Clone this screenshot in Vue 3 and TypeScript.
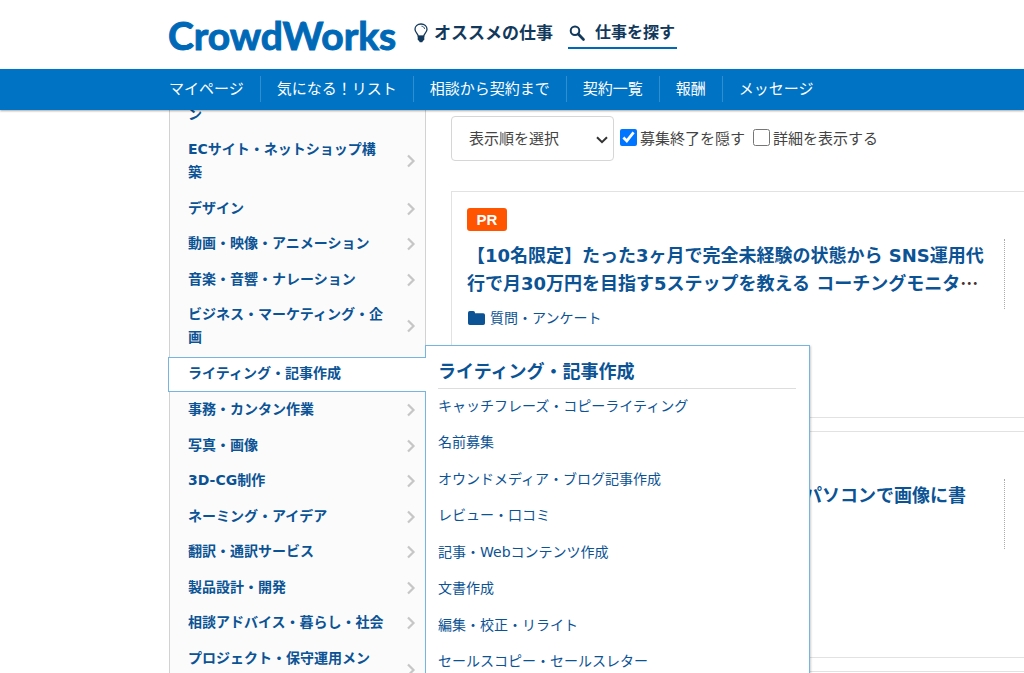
<script setup lang="ts">
import { ref } from 'vue'

interface Category {
  name: string
  active?: boolean
}

const navItems: string[] = ['マイページ', '気になる！リスト', '相談から契約まで', '契約一覧', '報酬', 'メッセージ']

const categories: Category[] = [
  { name: 'ン' },
  { name: 'ECサイト・ネットショップ構築' },
  { name: 'デザイン' },
  { name: '動画・映像・アニメーション' },
  { name: '音楽・音響・ナレーション' },
  { name: 'ビジネス・マーケティング・企画' },
  { name: 'ライティング・記事作成', active: true },
  { name: '事務・カンタン作業' },
  { name: '写真・画像' },
  { name: '3D-CG制作' },
  { name: 'ネーミング・アイデア' },
  { name: '翻訳・通訳サービス' },
  { name: '製品設計・開発' },
  { name: '相談アドバイス・暮らし・社会' },
  { name: 'プロジェクト・保守運用メンバー' },
]

const subCategories: string[] = [
  'キャッチフレーズ・コピーライティング',
  '名前募集',
  'オウンドメディア・ブログ記事作成',
  'レビュー・口コミ',
  '記事・Webコンテンツ作成',
  '文書作成',
  '編集・校正・リライト',
  'セールスコピー・セールスレター',
]

const hideClosed = ref(true)
const showDetail = ref(false)
</script>

<template>
  <div class="page" lang="ja">
    <header class="header">
      <div class="brand-row">
        <a href="#" class="logo">CrowdWorks</a>
        <a href="#" class="top-link">
          <svg class="bulb" width="14" height="20" viewBox="0 0 14 20" aria-hidden="true">
            <path d="M4.3 13.2C4.1 10.8 1 9.6 1 6.2C1 3 3.6 1 7 1s6 2 6 5.200c0 3.400-3.100 4.600-3.300 7z" fill="none" stroke="#12395b" stroke-width="1.3" />
            <path d="M7.500 3.200c1.700.1 2.900 1.100 3.100 2.700" fill="none" stroke="#12395b" stroke-width=".9" />
            <path d="M3.700 12.700h6.600v4.100l-1.400 1.200-.6 1.300H5.700l-.6-1.300-1.400-1.200z" fill="#12395b" />
          </svg>
          <span>オススメの仕事</span>
        </a>
        <a href="#" class="top-link current">
          <svg class="search" width="18" height="18" viewBox="0 0 18 18" aria-hidden="true">
            <circle cx="7" cy="6.800" r="4.300" fill="none" stroke="#12395b" stroke-width="2" />
            <path d="M10.200 10l5.300 5.500" stroke="#12395b" stroke-width="2.700" stroke-linecap="round" />
          </svg>
          <span>仕事を探す</span>
        </a>
      </div>
      <nav class="nav">
        <a v-for="item in navItems" :key="item" href="#">{{ item }}</a>
      </nav>
    </header>

    <main class="main">
      <aside class="sidebar">
        <ul class="categories">
          <li v-for="cat in categories" :key="cat.name" :class="{ active: cat.active }">
            <a href="#" class="category">
              <span>{{ cat.name }}</span>
              <svg v-if="!cat.active" width="10" height="14" viewBox="0 0 10 14" aria-hidden="true">
                <path d="M2 1.500L7.500 7L2 12.500" fill="none" stroke="#c6c6c6" stroke-width="2.200" />
              </svg>
            </a>
            <section v-if="cat.active" class="flyout">
              <h2>{{ cat.name }}</h2>
              <ul>
                <li v-for="sub in subCategories" :key="sub"><a href="#">{{ sub }}</a></li>
              </ul>
            </section>
          </li>
        </ul>
      </aside>

      <div class="content">
        <form class="filters">
          <div class="select-box">
            <select aria-label="表示順を選択">
              <option>表示順を選択</option>
            </select>
            <svg width="12" height="8" viewBox="0 0 12 8" aria-hidden="true">
              <path d="M1 1.200L6 6.200L11 1.200" fill="none" stroke="#333" stroke-width="2" />
            </svg>
          </div>
          <label><input v-model="hideClosed" type="checkbox" />募集終了を隠す</label>
          <label><input v-model="showDetail" type="checkbox" />詳細を表示する</label>
        </form>

        <article class="card">
          <div class="job">
            <span class="badge">PR</span>
            <h3><a href="#">【10名限定】たった3ヶ月で完全未経験の状態から SNS運用代行で月30万円を目指す5ステップを教える コーチングモニタ</a><span class="ellipsis">…</span></h3>
            <a href="#" class="job-category">
              <svg width="17" height="14" viewBox="0 0 17 14" aria-hidden="true">
                <path d="M0 1.800Q0 0 1.800 0H5.200Q7 0 7 1.800V2.200H15.200Q17 2.200 17 4V12.200Q17 14 15.200 14H1.800Q0 14 0 12.200z" fill="#0b5394" />
              </svg>
              <span>質問・アンケート</span>
            </a>
          </div>
          <div class="job-side"></div>
        </article>

        <article class="card">
          <div class="job tail">
            <h3><a href="#">パソコンで画像に書</a></h3>
          </div>
          <div class="job-side"></div>
        </article>

        <article class="card"></article>
      </div>
    </main>
  </div>
</template>

<style>
body {
  margin: 0;
  background: #fff;
}
</style>

<style scoped>
.page {
  height: 100vh;
  display: flex;
  flex-direction: column;
  overflow: hidden;
  font-family: "DejaVu Sans", "Noto Sans CJK JP", sans-serif;
  font-size: 15px;
  color: #444;
}

.page * {
  box-sizing: border-box;
}

a {
  color: #0b5394;
  text-decoration: none;
}

ul {
  list-style: none;
  margin: 0;
  padding: 0;
}

.header {
  flex: none;
  position: relative;
  z-index: 5;
}

.brand-row {
  height: 69px;
  padding-left: 168px;
  display: flex;
  align-items: center;
  background: #fff;
}

.logo {
  width: 246px;
  font: 700 39px/50px Lato, sans-serif;
  color: #0069b7;
  -webkit-text-stroke: 1px #0069b7;
}

.top-link {
  display: flex;
  align-items: center;
  gap: 6px;
  height: 30px;
  margin: 0 15px 2px 0;
  border-bottom: 2px solid transparent;
  font-size: 17px;
  line-height: 28px;
  font-weight: 700;
  color: #12395b;
}

.top-link.current {
  gap: 9px;
  padding-right: 2px;
  font-size: 16px;
  border-color: #0069b7;
}

.nav {
  height: 41px;
  padding: 0 0 2px 153px;
  display: flex;
  align-items: center;
  background: #0073c4;
  box-shadow: 0 1px 2px rgba(0, 0, 0, 0.35);
}

.nav a {
  padding: 0 16px;
  line-height: 26px;
  color: #fff;
}

.nav a + a {
  border-left: 1px solid #2e8ed2;
}

.main {
  flex: 1;
  min-height: 0;
  padding-left: 169px;
  display: flex;
  align-items: flex-start;
  gap: 25px;
}

.sidebar {
  flex: none;
  width: 257px;
  margin-top: -13px;
  position: relative;
  z-index: 2;
  background: #fbfbfb;
  border: 1px solid #d2d2d2;
  border-top: 0;
}

.categories > li {
  position: relative;
}

.categories > li:nth-child(even) {
  padding-bottom: 1px;
}

.categories > li:first-child svg {
  display: none;
}

.category {
  display: flex;
  align-items: center;
  justify-content: space-between;
  padding: 6px 9px 6px 18px;
  font-size: 14px;
  line-height: 23px;
  font-weight: 700;
  line-break: strict;
}

.category span {
  width: 200px;
}

.categories > .active {
  z-index: 1;
  margin: 0 -1px 0 -2px;
  padding-top: 1px;
}

.active .category {
  position: relative;
  z-index: 1;
  padding: 4px 10px 6px 19px;
  background: #fff;
  border: 1px solid #78b4e0;
  border-right: 0;
}

.flyout {
  position: absolute;
  top: -11px;
  left: calc(100% - 1px);
  width: 385px;
  padding: 13px 13px 20px 12px;
  background: #fff;
  border: 1px solid #78b4e0;
  box-shadow: 1px 1px 2px rgba(0, 0, 0, 0.2);
}

.flyout h2 {
  margin: 0;
  padding-bottom: 3px;
  border-bottom: 1px solid #ddd;
  font-size: 18px;
  line-height: 26px;
  color: #0b5394;
}

.flyout li {
  padding-bottom: 2px;
  font-size: 14px;
  line-height: 34px;
}

.flyout li:nth-child(even) {
  padding-bottom: 3px;
}

.content {
  flex: 1;
  min-width: 0;
  padding-top: 6px;
}

.filters {
  display: flex;
  align-items: center;
  margin-bottom: 30px;
}

.select-box {
  position: relative;
  width: 163px;
  height: 45px;
  margin-right: 6px;
}

.select-box select {
  appearance: none;
  width: 100%;
  height: 100%;
  padding: 0 17px;
  border: 1px solid #d6d6d6;
  border-radius: 4px;
  background: #fff;
  font: inherit;
  color: #444;
}

.select-box svg {
  position: absolute;
  right: 6px;
  top: 20px;
}

.filters label {
  display: flex;
  align-items: center;
  gap: 3px;
  margin-right: 8px;
  padding-bottom: 2px;
}

.filters input {
  width: 17px;
  height: 17px;
  margin: 0;
}

.card {
  display: flex;
  height: 227px;
  margin-bottom: 13px;
  padding: 16px 0 15px 15px;
  border: 1px solid #e2e2e2;
  border-right: 0;
}

.job {
  flex: 1;
  padding-right: 10px;
}

.badge {
  display: block;
  width: 40px;
  margin-bottom: 11px;
  border-radius: 3px;
  background: #ff5500;
  font: 700 15px/23px "Liberation Sans", sans-serif;
  color: #fff;
  text-align: center;
}

h3 {
  margin: 0;
  font-size: 18px;
  line-height: 27px;
}

.ellipsis {
  font-family: "Noto Sans CJK JP", sans-serif;
  color: #433;
}

.job-category {
  display: flex;
  align-items: center;
  gap: 5px;
  margin-top: 9px;
  padding-left: 1px;
  font-size: 14px;
  line-height: 24px;
}

.tail {
  padding: 34px 38px 0 0;
  text-align: right;
}

.job-side {
  width: 20px;
  height: 70px;
  margin-top: 31px;
  border-left: 1px dotted #aaa;
}
</style>
